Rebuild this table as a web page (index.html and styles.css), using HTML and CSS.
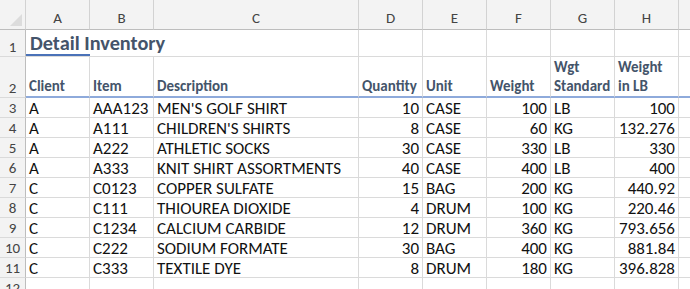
FILE: index.html
```
<!DOCTYPE html>
<html>
<head>
<meta charset="utf-8">
<link rel="stylesheet" href="styles.css">
</head>
<body>
<div class="sheet">
  <div class="hd corner"><span class="tri"></span></div>
  <div class="hd ch">A</div><div class="hd ch">B</div><div class="hd ch">C</div><div class="hd ch">D</div><div class="hd ch">E</div><div class="hd ch">F</div><div class="hd ch">G</div><div class="hd ch">H</div><div class="hd ch"></div>

  <div class="hd rh">1</div><div class="c title">Detail Inventory</div><div class="c"></div><div class="c"></div><div class="c"></div><div class="c"></div><div class="c"></div><div class="c"></div>

  <div class="hd rh">2</div>
  <div class="c lbl">Client</div><div class="c lbl">Item</div><div class="c lbl">Description</div><div class="c lbl">Quantity</div><div class="c lbl">Unit</div><div class="c lbl">Weight</div><div class="c lbl">Wgt<br>Standard</div><div class="c lbl">Weight<br>in LB</div><div class="c lbl"></div>

  <div class="hd rh">3</div><div class="c">A</div><div class="c">AAA123</div><div class="c">MEN'S GOLF SHIRT</div><div class="c n">10</div><div class="c">CASE</div><div class="c n">100</div><div class="c">LB</div><div class="c n">100</div><div class="c"></div>
  <div class="hd rh">4</div><div class="c">A</div><div class="c">A111</div><div class="c">CHILDREN'S SHIRTS</div><div class="c n">8</div><div class="c">CASE</div><div class="c n">60</div><div class="c">KG</div><div class="c n">132.276</div><div class="c"></div>
  <div class="hd rh">5</div><div class="c">A</div><div class="c">A222</div><div class="c">ATHLETIC SOCKS</div><div class="c n">30</div><div class="c">CASE</div><div class="c n">330</div><div class="c">LB</div><div class="c n">330</div><div class="c"></div>
  <div class="hd rh">6</div><div class="c">A</div><div class="c">A333</div><div class="c">KNIT SHIRT ASSORTMENTS</div><div class="c n">40</div><div class="c">CASE</div><div class="c n">400</div><div class="c">LB</div><div class="c n">400</div><div class="c"></div>
  <div class="hd rh">7</div><div class="c">C</div><div class="c">C0123</div><div class="c">COPPER SULFATE</div><div class="c n">15</div><div class="c">BAG</div><div class="c n">200</div><div class="c">KG</div><div class="c n">440.92</div><div class="c"></div>
  <div class="hd rh">8</div><div class="c">C</div><div class="c">C111</div><div class="c">THIOUREA DIOXIDE</div><div class="c n">4</div><div class="c">DRUM</div><div class="c n">100</div><div class="c">KG</div><div class="c n">220.46</div><div class="c"></div>
  <div class="hd rh">9</div><div class="c">C</div><div class="c">C1234</div><div class="c">CALCIUM CARBIDE</div><div class="c n">12</div><div class="c">DRUM</div><div class="c n">360</div><div class="c">KG</div><div class="c n">793.656</div><div class="c"></div>
  <div class="hd rh">10</div><div class="c">C</div><div class="c">C222</div><div class="c">SODIUM FORMATE</div><div class="c n">30</div><div class="c">BAG</div><div class="c n">400</div><div class="c">KG</div><div class="c n">881.84</div><div class="c"></div>
  <div class="hd rh">11</div><div class="c">C</div><div class="c">C333</div><div class="c">TEXTILE DYE</div><div class="c n">8</div><div class="c">DRUM</div><div class="c n">180</div><div class="c">KG</div><div class="c n">396.828</div><div class="c"></div>
  <div class="hd rh">12</div><div class="c"></div><div class="c"></div><div class="c"></div><div class="c"></div><div class="c"></div><div class="c"></div><div class="c"></div><div class="c"></div><div class="c"></div>
</div>
</body>
</html>
```
FILE: styles.css
```
html, body {
  margin: 0;
  padding: 0;
  background: #ffffff;
  overflow: hidden;
}

.sheet {
  display: grid;
  grid-template-columns: 26px 64px 64px 205px 64px 64px 64px 64px 64px 40px;
  grid-template-rows: 30px 27px 41px repeat(10, 20px);
  font-family: Calibri, Carlito, "Open Sans", sans-serif;
  font-size: 17px;
  line-height: 1;
  color: #111111;
}

.sheet > div {
  box-sizing: border-box;
  border-right: 1px solid #dadada;
  border-bottom: 1px solid #dadada;
  white-space: nowrap;
  display: flex;
  align-items: flex-end;
  overflow: visible;
}

.hd {
  background: #f3f3f3;
  color: #444444;
  font-size: 15px;
  justify-content: center;
}

.sheet > .corner,
.sheet > .ch {
  border-right-color: #d2d2d2;
  border-bottom-color: #bdbdbd;
  padding-bottom: 3px;
}

.sheet > .corner {
  position: relative;
}

.tri {
  position: absolute;
  right: 3px;
  bottom: 3px;
  width: 0;
  height: 0;
  border-left: 12px solid transparent;
  border-bottom: 12px solid #dcdcdc;
}

.sheet > .rh {
  border-right-color: #bdbdbd;
  padding-bottom: 1px;
}

.c {
  padding: 0 3px 0 3px;
}

.c.n {
  justify-content: flex-end;
}

.sheet > .title {
  grid-column: span 3;
  font-size: 20.3px;
  font-weight: 700;
  color: #44546a;
  padding-left: 4px;
  padding-bottom: 3px;
  background-image: linear-gradient(#4a72b8, #4a72b8);
  background-repeat: no-repeat;
  background-origin: border-box;
  background-position: left bottom;
  background-size: 64px 3px;
}

.sheet > .lbl {
  font-size: 15px;
  font-weight: 700;
  color: #44546a;
  white-space: normal;
  line-height: 19px;
  padding-bottom: 0;
  border-bottom: 2px solid #8eaadb;
}
```
